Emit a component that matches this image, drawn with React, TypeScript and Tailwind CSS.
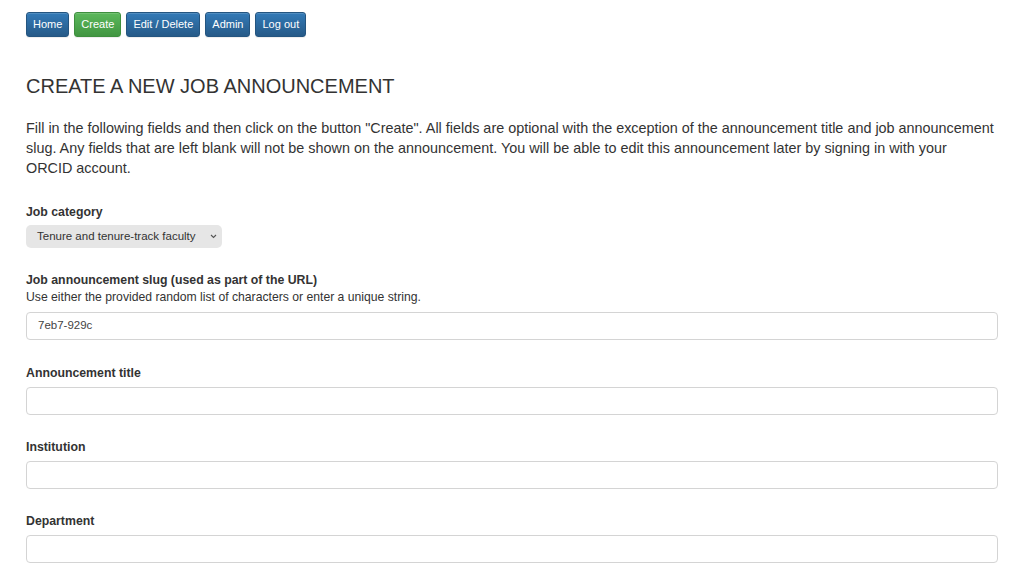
import * as React from "react"

const font = { fontFamily: '"Liberation Sans", Arial, sans-serif' }

function NavButton({ label, green }: { label: string; green?: boolean }) {
  return (
    <button
      className={
        green
          ? "h-[25px] px-[6px] rounded-[3px] border border-[#3e8f3e] bg-gradient-to-b from-[#5cb85c] to-[#419641] text-white text-[11px] shadow-[inset_0_1px_0_rgba(255,255,255,0.15),0_1px_1px_rgba(0,0,0,0.075)]"
          : "h-[25px] px-[6px] rounded-[3px] border border-[#245580] bg-gradient-to-b from-[#337ab7] to-[#265a88] text-white text-[11px] shadow-[inset_0_1px_0_rgba(255,255,255,0.15),0_1px_1px_rgba(0,0,0,0.075)]"
      }
    >
      {label}
    </button>
  )
}

function Field({ label, mt }: { label: string; mt: string }) {
  return (
    <div className={mt}>
      <div className="text-[12.3px] leading-[16px] font-bold text-[#333]">{label}</div>
      <div className="mt-[6px] h-[28px] w-full rounded-[4px] border border-[#d4d4d4] bg-white" />
    </div>
  )
}

export default function App() {
  return (
    <div className="w-[1024px] h-[581px] overflow-hidden bg-white text-[#333]" style={font}>
      <div className="pl-[26px] w-[998px]">
        <div className="pt-[12px] flex gap-[5px]">
          <NavButton label="Home" />
          <NavButton label="Create" green />
          <NavButton label="Edit / Delete" />
          <NavButton label="Admin" />
          <NavButton label="Log out" />
        </div>

        <h1 className="mt-[37px] text-[20px] leading-[24px] text-[#333]">CREATE A NEW JOB ANNOUNCEMENT</h1>

        <p className="mt-[20px] w-[970px] text-[14.4px] leading-[20px] text-[#333]">
          Fill in the following fields and then click on the button "Create". All fields are optional with the exception of the announcement title and job announcement slug. Any fields that are left blank will not be shown on the announcement. You will be able to edit this announcement later by signing in with your ORCID account.
        </p>

        <div className="mt-[26px]">
          <div className="text-[12.3px] leading-[16px] font-bold text-[#333]">Job category</div>
          <div className="mt-[5px] inline-flex items-center h-[23px] w-[196px] rounded-[5px] bg-[#e6e6e6] pl-[11px] pr-[5px] text-[11.5px] text-[#333]">
            <span className="flex-1">Tenure and tenure-track faculty</span>
            <svg width="7" height="5" viewBox="0 0 7 5" fill="none">
              <path d="M1 1l2.5 2.5L6 1" stroke="#555" strokeWidth="1.1" />
            </svg>
          </div>
        </div>

        <div className="mt-[24px]">
          <div className="text-[12.3px] leading-[16px] font-bold text-[#333]">Job announcement slug (used as part of the URL)</div>
          <div className="text-[12.2px] leading-[18px] text-[#333]">Use either the provided random list of characters or enter a unique string.</div>
          <div className="mt-[6px] h-[28px] w-full rounded-[4px] border border-[#d4d4d4] bg-white flex items-center px-[11px] text-[11.5px] text-[#444]">
            7eb7-929c
          </div>
        </div>

        <Field label="Announcement title" mt="mt-[25px]" />
        <Field label="Institution" mt="mt-[24px]" />
        <Field label="Department" mt="mt-[24px]" />
      </div>
    </div>
  )
}
